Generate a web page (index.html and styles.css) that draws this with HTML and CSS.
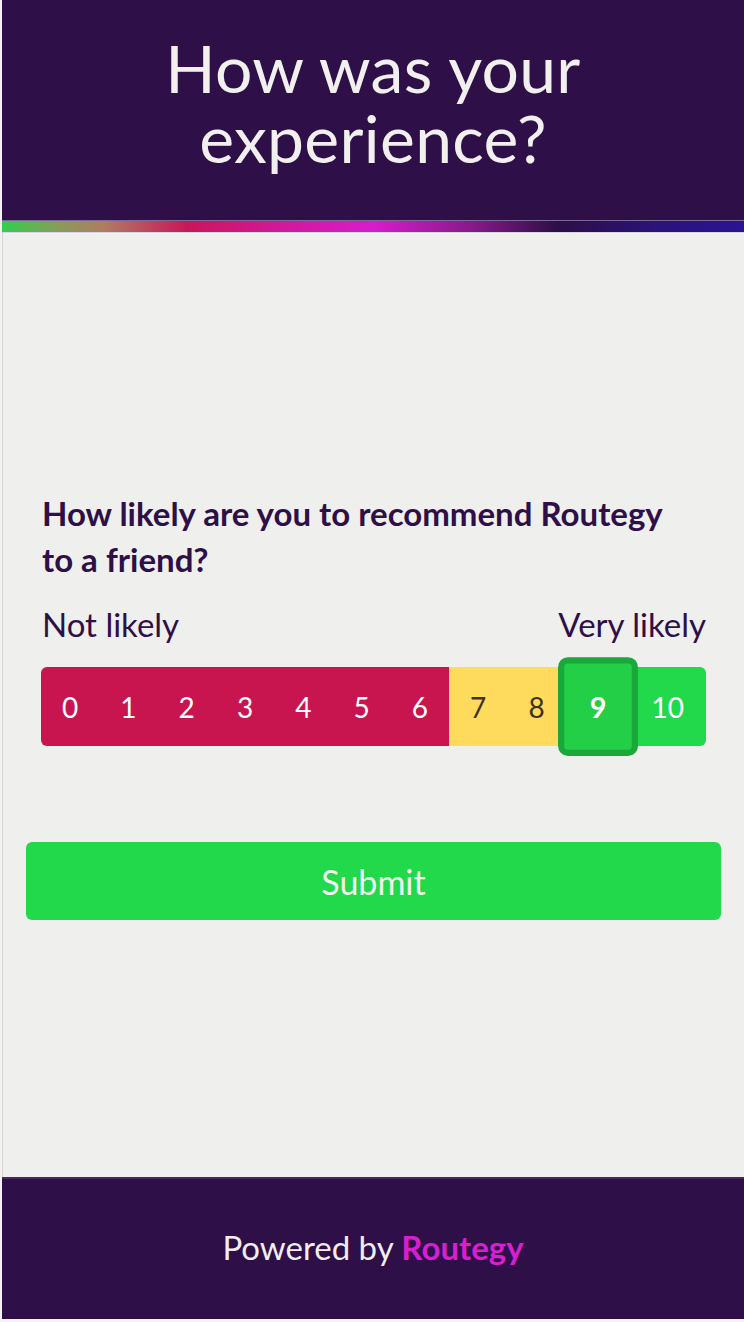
FILE: index.html
```html
<!DOCTYPE html>
<html lang="en">
<head>
<meta charset="utf-8">
<title>How was your experience?</title>
<link rel="stylesheet" href="styles.css">
</head>
<body>
<div class="page">
  <header class="hero">
    <h1 class="hero-title"><span class="hero-line">How was your</span><span class="hero-line">experience?</span></h1>
  </header>
  <div class="stripe"></div>
  <main class="survey">
    <div class="survey-inner">
      <h2 class="question">How likely are you to recommend Routegy to a friend?</h2>
      <div class="labels">
        <span>Not likely</span>
        <span>Very likely</span>
      </div>
      <div class="scale">
        <button class="cell red">0</button>
        <button class="cell red">1</button>
        <button class="cell red">2</button>
        <button class="cell red">3</button>
        <button class="cell red">4</button>
        <button class="cell red">5</button>
        <button class="cell red">6</button>
        <button class="cell yellow">7</button>
        <button class="cell yellow">8</button>
        <button class="cell green selected">9</button>
        <button class="cell green last">10</button>
      </div>
    </div>
    <button class="submit">Submit</button>
  </main>
  <footer class="footer">
    <p class="powered">Powered by <span class="brand">Routegy</span></p>
  </footer>
</div>
</body>
</html>
```

FILE: styles.css
```css
* { box-sizing: border-box; }

html, body {
  margin: 0;
  padding: 0;
  background: #f3f3f1;
}

body {
  font-family: Lato, "Open Sans", sans-serif;
  color: #2e0f48;
}

.page {
  width: 742px;
  margin-left: 2px;
  display: flex;
  flex-direction: column;
}

.hero {
  background: #2e0f48;
  height: 221px;
  padding-top: 33px;
  border-bottom: 1px solid #7c6a98;
}

.hero-title {
  margin: 0;
  text-align: center;
  color: #f1f0ee;
  font-size: 66px;
  font-weight: 400;
  letter-spacing: 0.3px;
  display: flex;
  flex-direction: column;
  align-items: center;
  gap: 0;
}

.hero-line {
  display: block;
  line-height: 70px;
  height: 70px;
}

.stripe {
  height: 12px;
  background: linear-gradient(90deg,
    #30cf4c 0%,
    #8b9a5a 8%,
    #b07a62 14%,
    #c8175a 25%,
    #d11893 36%,
    #d81ccc 50%,
    #8a1a8c 63%,
    #2c0f46 75%,
    #2a137a 88%,
    #2b1392 100%);
  border-bottom: 1px solid #d9d6e0;
}

.survey {
  height: 944px;
  background: #efefed;
  border-left: 1px solid #d4d4d2;
  display: flex;
  flex-direction: column;
  justify-content: center;
  padding: 0 23px 0 23px;
}

.survey-inner {
  padding: 0 15px;
}

.question {
  margin: 0 0 0 1px;
  max-width: 640px;
  font-size: 33px;
  line-height: 46px;
  font-weight: 700;
  color: #2e0f48;
}

.labels {
  margin-top: 23px;
  display: flex;
  justify-content: space-between;
  font-size: 33px;
  line-height: 38px;
  color: #2e0f48;
  padding-left: 1px;
}

.scale {
  margin-top: 24px;
  display: flex;
  height: 79px;
}

.cell {
  width: 58.3px;
  flex: none;
  border: none;
  margin: 0;
  padding: 0;
  font-family: Lato, "Open Sans", sans-serif;
  font-size: 28px;
  color: #ffffff;
  display: flex;
  align-items: center;
  justify-content: center;
}

.cell.red { background: #c9154f; }
.cell.red:first-child { border-radius: 6px 0 0 6px; }
.cell.yellow { background: #fedb5c; color: #3d3418; }
.cell.green { background: #22d84b; }

.cell.selected {
  width: 64px;
  position: relative;
  z-index: 1;
  transform: scale(1.25);
  border: 5px solid #1aa83a;
  border-radius: 8px;
  background: #22cf47;
  font-weight: 700;
  font-size: 23px;
}

.cell.last {
  flex: 1;
  width: auto;
  border-radius: 0 6px 6px 0;
}

.submit {
  margin-top: 96px;
  height: 78px;
  width: 100%;
  border: none;
  border-radius: 6px;
  background: #22d84b;
  color: #f1f5ee;
  font-family: Lato, "Open Sans", sans-serif;
  font-size: 34px;
  padding-top: 2px;
}

.footer {
  height: 142px;
  background: #2e0f48;
  border-top: 2px solid #46285f;
  display: flex;
  align-items: center;
  justify-content: center;
}

.powered {
  margin: 0 0 4px;
  font-size: 33px;
  color: #f1eef2;
}

.brand {
  color: #d61fcf;
  font-weight: 700;
}
```
